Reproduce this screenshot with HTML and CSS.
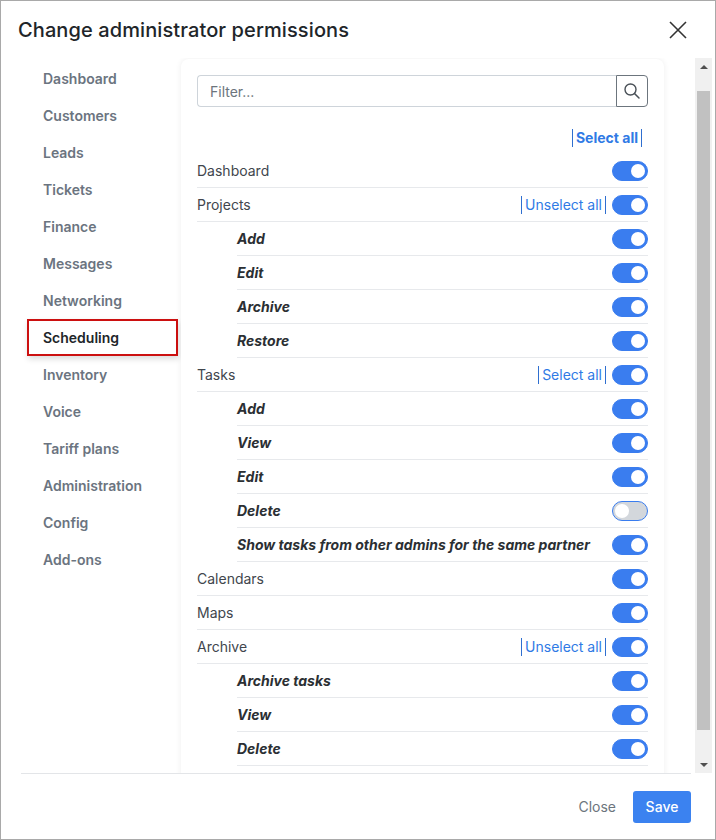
FILE: index.html
```html
<!DOCTYPE html>
<html>
<head>
<meta charset="utf-8">
<title>Change administrator permissions</title>
<link rel="stylesheet" href="styles.css">
</head>
<body>
<div class="modal">
  <div class="header">
    <h1 class="title">Change administrator permissions</h1>
    <button class="close-x" aria-label="Close">
      <svg width="18" height="18" viewBox="0 0 18 18"><path d="M1 1L17 17M17 1L1 17" stroke="#333" stroke-width="1.6" fill="none"/></svg>
    </button>
  </div>
  <div class="main">
    <div class="scroll">
      <nav class="nav">
        <div class="nav-item">Dashboard</div>
        <div class="nav-item">Customers</div>
        <div class="nav-item">Leads</div>
        <div class="nav-item">Tickets</div>
        <div class="nav-item">Finance</div>
        <div class="nav-item">Messages</div>
        <div class="nav-item">Networking</div>
        <div class="nav-item active">Scheduling</div>
        <div class="nav-item">Inventory</div>
        <div class="nav-item">Voice</div>
        <div class="nav-item">Tariff plans</div>
        <div class="nav-item">Administration</div>
        <div class="nav-item">Config</div>
        <div class="nav-item">Add-ons</div>
      </nav>
      <div class="panel">
        <div class="filter">
          <input class="filter-input" type="text" placeholder="Filter...">
          <button class="filter-btn" aria-label="Search">
            <svg width="18" height="18" viewBox="0 0 18 18"><circle cx="7.5" cy="7.5" r="5.5" stroke="#495057" stroke-width="1.4" fill="none"/><path d="M11.5 11.5L16 16" stroke="#495057" stroke-width="1.5" stroke-linecap="round"/></svg>
          </button>
        </div>
        <div class="select-row"><a class="link bold">Select all</a></div>

        <div class="row"><span class="label">Dashboard</span><span class="toggle on"></span></div>
        <div class="row"><span class="label">Projects</span><a class="link">Unselect all</a><span class="toggle on"></span></div>
        <div class="row sub"><span class="label">Add</span><span class="toggle on"></span></div>
        <div class="row sub"><span class="label">Edit</span><span class="toggle on"></span></div>
        <div class="row sub"><span class="label">Archive</span><span class="toggle on"></span></div>
        <div class="row sub"><span class="label">Restore</span><span class="toggle on"></span></div>
        <div class="row"><span class="label">Tasks</span><a class="link">Select all</a><span class="toggle on"></span></div>
        <div class="row sub"><span class="label">Add</span><span class="toggle on"></span></div>
        <div class="row sub"><span class="label">View</span><span class="toggle on"></span></div>
        <div class="row sub"><span class="label">Edit</span><span class="toggle on"></span></div>
        <div class="row sub"><span class="label">Delete</span><span class="toggle off"></span></div>
        <div class="row sub"><span class="label">Show tasks from other admins for the same partner</span><span class="toggle on"></span></div>
        <div class="row"><span class="label">Calendars</span><span class="toggle on"></span></div>
        <div class="row"><span class="label">Maps</span><span class="toggle on"></span></div>
        <div class="row"><span class="label">Archive</span><a class="link">Unselect all</a><span class="toggle on"></span></div>
        <div class="row sub"><span class="label">Archive tasks</span><span class="toggle on"></span></div>
        <div class="row sub"><span class="label">View</span><span class="toggle on"></span></div>
        <div class="row sub"><span class="label">Delete</span><span class="toggle on"></span></div>
      </div>
    </div>
    <div class="scrollbar">
      <div class="sb-btn"><span class="tri-up"></span></div>
      <div class="sb-track"><div class="sb-thumb"></div></div>
      <div class="sb-btn"><span class="tri-down"></span></div>
    </div>
  </div>
  <div class="footer">
    <button class="btn-close">Close</button>
    <button class="btn-save">Save</button>
  </div>
</div>
</body>
</html>
```

FILE: styles.css
```css
* { box-sizing: border-box; }
html, body { margin: 0; padding: 0; background: #fff; }
body { font-family: Inter, "Noto Sans", sans-serif; color: #212529; }

.modal {
  width: 716px;
  height: 840px;
  border: 1px solid #a9a9a9;
  display: flex;
  flex-direction: column;
  overflow: hidden;
}

.header {
  height: 57px;
  flex: none;
  display: flex;
  align-items: center;
  justify-content: space-between;
  padding: 1px 28px 0 17px;
}
.title {
  margin: 0;
  font-size: 20px;
  font-weight: 500;
  color: #212529;
  letter-spacing: 0.1px;
}
.close-x {
  border: 0;
  background: none;
  padding: 0;
  width: 18px;
  height: 18px;
  display: flex;
}

.main {
  height: 715px;
  flex: none;
  display: flex;
}
.scroll {
  flex: 1;
  overflow: hidden;
  display: flex;
  align-items: flex-start;
  padding-left: 26px;
}

.nav {
  width: 151px;
  flex: none;
  padding-top: 2px;
}
.nav-item {
  height: 37px;
  line-height: 37px;
  padding-left: 16px;
  font-size: 14px;
  font-weight: 600;
  color: #6b7480;
}
.nav-item.active {
  color: #212529;
  border: 2px solid #cc1010;
  line-height: 33px;
  padding-left: 14px;
  box-shadow: 1px 3px 6px rgba(0, 0, 0, 0.14);
}

.panel {
  width: 483px;
  flex: none;
  margin: 1px 0 0 3px;
  padding: 16px 16px 40px 16px;
  background: #fff;
  border-radius: 8px 8px 0 0;
  box-shadow: 0 0 6px rgba(0, 0, 0, 0.07);
}

.filter {
  display: flex;
  height: 32px;
}
.filter-input {
  flex: 1;
  height: 32px;
  border: 1px solid #ced4da;
  border-right: 0;
  border-radius: 4px 0 0 4px;
  padding: 0 12px;
  font-family: Inter, sans-serif;
  font-size: 14px;
  color: #495057;
  outline: none;
}
.filter-input::placeholder { color: #6c757d; }
.filter-btn {
  width: 32px;
  height: 32px;
  border: 1px solid #6c757d;
  border-radius: 0 4px 4px 0;
  background: #fff;
  display: flex;
  align-items: center;
  justify-content: center;
  padding: 0;
}

.select-row {
  margin-top: 15px;
  height: 32px;
  display: flex;
  align-items: center;
  justify-content: flex-end;
}

.link {
  font-size: 14px;
  color: #2f7ae5;
  border-left: 1px solid #2f6fd0;
  border-right: 1px solid #2f6fd0;
  padding: 1px 3px;
  line-height: 16px;
  margin-right: 6px;
}
.link.bold { font-weight: 700; }

.row {
  height: 34px;
  display: flex;
  align-items: center;
  border-bottom: 1px solid #e7e9ec;
}
.row .label {
  flex: 1;
  font-size: 14px;
  color: #41464d;
}
.row.sub { margin-left: 40px; }
.row.sub .label {
  font-weight: 700;
  font-style: italic;
  color: #2b2f33;
}

.toggle {
  width: 36px;
  height: 20px;
  border-radius: 10px;
  flex: none;
  position: relative;
  background: #3a7def;
  border: 1px solid #3a7def;
}
.toggle::after {
  content: "";
  position: absolute;
  top: 2px;
  width: 14px;
  height: 14px;
  border-radius: 50%;
  background: #fff;
}
.toggle.on::after { right: 2px; }
.toggle.off {
  background: #d3d7dc;
  border-color: #3a7def;
}
.toggle.off::after { left: 2px; }

.scrollbar {
  width: 17px;
  margin-right: 3px;
  flex: none;
  background: #f0f0f0;
  display: flex;
  flex-direction: column;
  height: 715px;
}
.sb-btn {
  height: 17px;
  display: flex;
  align-items: center;
  justify-content: center;
}
.tri-up {
  width: 0; height: 0;
  border-left: 4px solid transparent;
  border-right: 4px solid transparent;
  border-bottom: 4px solid #505050;
}
.tri-down {
  width: 0; height: 0;
  border-left: 4px solid transparent;
  border-right: 4px solid transparent;
  border-top: 4px solid #505050;
}
.sb-track { flex: 1; padding: 16px 2px 0 2px; }
.sb-thumb { height: 639px; background: #c1c1c1; }

.footer {
  flex: 1;
  margin: 0 24px 0 20px;
  border-top: 1px solid #e3e5e8;
  display: flex;
  align-items: center;
  justify-content: flex-end;
}
.btn-close {
  border: 0;
  background: none;
  font-family: Inter, sans-serif;
  font-size: 14px;
  color: #6c757d;
  padding: 0;
  margin-right: 17px;
}
.btn-save {
  width: 58px;
  height: 32px;
  border: 0;
  border-radius: 3px;
  background: #3b82f0;
  color: #fff;
  font-family: Inter, sans-serif;
  font-size: 14px;
  font-weight: 500;
}
```
